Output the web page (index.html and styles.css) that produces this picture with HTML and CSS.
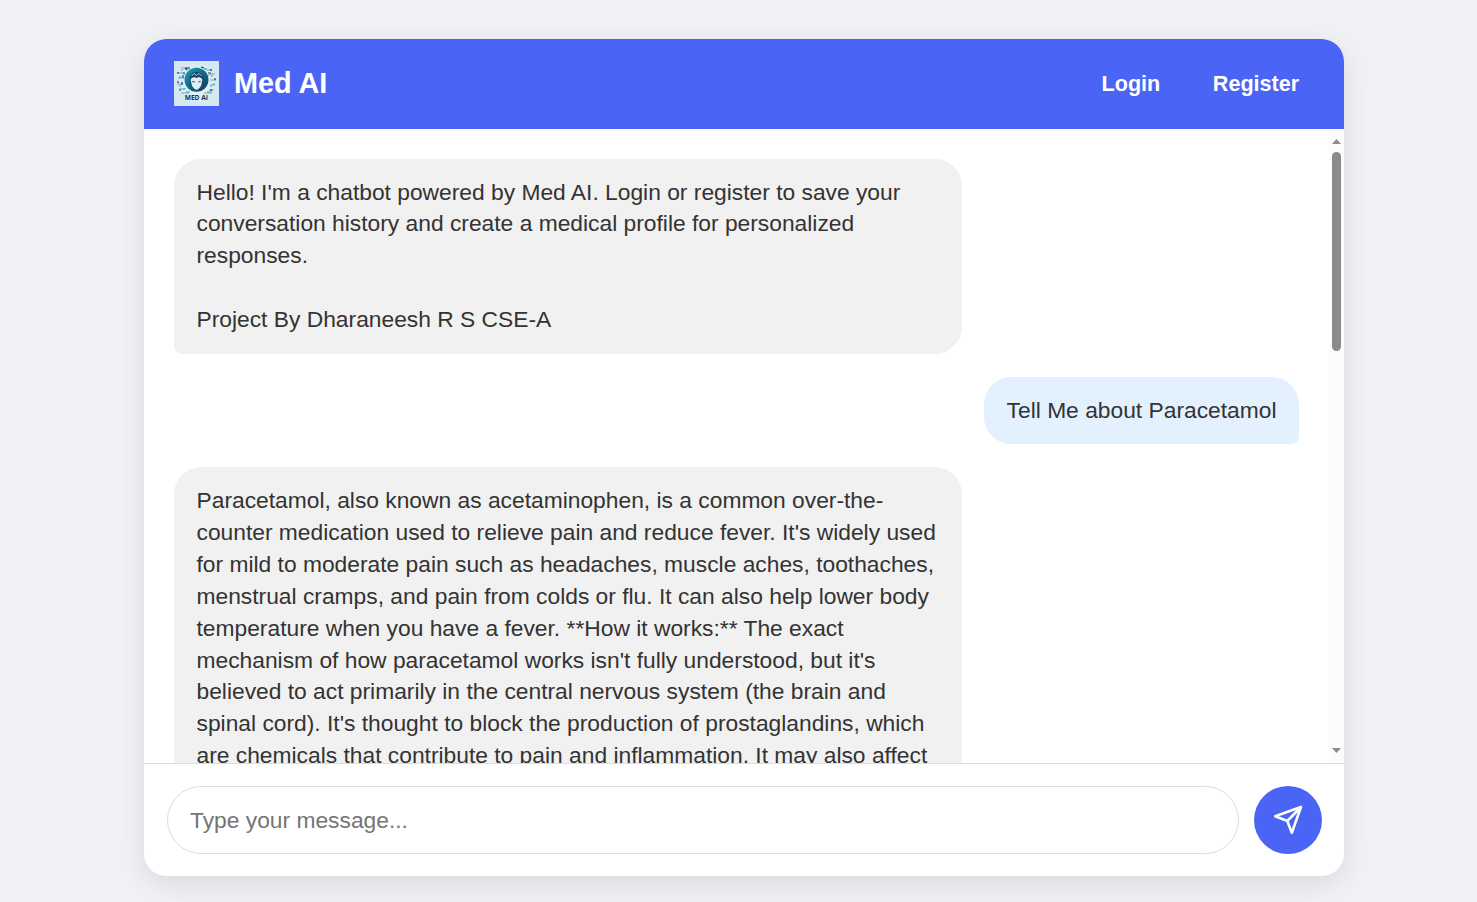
FILE: index.html
```
<!DOCTYPE html>
<html lang="en">
<head>
<meta charset="utf-8">
<title>Med AI</title>
<link rel="stylesheet" href="styles.css">
</head>
<body>
<main class="chat">
  <header class="chat-header">
    <div class="brand">
      <svg class="logo" viewBox="0 0 45 45" aria-hidden="true">
        <defs>
          <radialGradient id="bg"><stop offset="0" stop-color="#eff7f9"/><stop offset="1" stop-color="#d3e8f1"/></radialGradient>
          <linearGradient id="disc" x1="0" y1="0" x2="1" y2="1"><stop offset="0" stop-color="#18a3bd"/><stop offset=".5" stop-color="#10678f"/><stop offset="1" stop-color="#123a5c"/></linearGradient>
        </defs>
        <rect width="45" height="45" fill="url(#bg)"/>
        <g fill="none" stroke="#4b8ba5" stroke-width=".7">
          <path d="M7 7h6l3 2M4 12h5l2 2M4 17h6M3 23h6M5 28h5l2-1M7 32h8"/>
          <path d="M38 9h-5l-5-3M41 13h-5l-2 2M42 19h-6M41 24h-5M40 29h-5M38 32h-8"/>
        </g>
        <g fill="none" stroke="#1d4560" stroke-width="1.200">
          <path d="M11 7l2 2M4 11v2M9 14v3M4 20v2M8 21v3M12 7h4M27 6l3 1M37 8v2M34 12h3M41 17v2M37 28v2M5 29h2M9 12h2"/>
        </g>
        <g fill="none" stroke="#28b5d2" stroke-width="1.200">
          <path d="M6 15v2M5 25h2M9 28h2M12 31h4M33 31h5M38 14v2M40 22v2M36 25h2M30 8h3M7 9h2"/>
        </g>
        <circle cx="22.500" cy="18.800" r="12" fill="url(#disc)"/>
        <path d="M15.500 18.500c0-4.500 2.800-7.500 7-7.500s7 3 7 7.500l-1 5.500-3 4-3 1.500-3-1.500-3-4z" fill="#174460"/>
        <path d="M17 17.500l3-1.500 2.500 1 2.500-1 3 1.500 .3 2-1.300 5.500-2.200 2.800-2.300 1.200-2.300-1.200-2.200-2.800-1.300-5.500z" fill="#dceff5"/>
        <path d="M17.500 15l2.500-2.500 2.500 2 2.500-2 2.500 2.500" fill="none" stroke="#a9d8e3" stroke-width="1"/>
        <path d="M18.300 20.300l2.500.7M26.700 20.300l-2.500.7" fill="none" stroke="#1377a5" stroke-width="1.200"/>
        <text class="logo-text" x="22.300" y="39" text-anchor="middle" textLength="23" lengthAdjust="spacingAndGlyphs">MED AI</text>
      </svg>
      <h1 class="title">Med AI</h1>
    </div>
    <nav class="nav">
      <a class="nav-link">Login</a>
      <a class="nav-link">Register</a>
    </nav>
  </header>
  <div class="body">
    <section class="messages">
      <div class="message bot">Hello! I'm a chatbot powered by Med AI. Login or register to save your conversation history and create a medical profile for personalized responses.<br><br>Project By Dharaneesh R S CSE-A</div>
      <div class="message user">Tell Me about Paracetamol</div>
      <div class="message bot">Paracetamol, also known as acetaminophen, is a common over-the-counter medication used to relieve pain and reduce fever. It's widely used for mild to moderate pain such as headaches, muscle aches, toothaches, menstrual cramps, and pain from colds or flu. It can also help lower body temperature when you have a fever. **How it works:** The exact mechanism of how paracetamol works isn't fully understood, but it's believed to act primarily in the central nervous system (the brain and spinal cord). It's thought to block the production of prostaglandins, which are chemicals that contribute to pain and inflammation. It may also affect</div>
    </section>
    <div class="scrollbar">
      <svg class="arrow" viewBox="0 0 9 5"><path d="M4.500 0L9 5H0z"/></svg>
      <div class="thumb"></div>
      <svg class="arrow arrow-down" viewBox="0 0 9 5"><path d="M0 0h9L4.500 5z"/></svg>
    </div>
  </div>
  <footer class="composer">
    <input class="input" type="text" placeholder="Type your message...">
    <button class="send" aria-label="Send">
      <svg class="send-icon" viewBox="0 0 36 36"><path d="M31 5L5.200 14.200l12.100 4.800 4.500 11.700zM31 5L17.300 19"/></svg>
    </button>
  </footer>
</main>
</body>
</html>
```
FILE: styles.css
```
* { box-sizing: border-box; }

body {
  margin: 0;
  height: 902px;
  padding: 39px 0 0 144px;
  overflow: hidden;
  background: #f0f2f5;
  font-family: "Liberation Sans", Arial, sans-serif;
  color: #333;
}

.chat {
  display: flex;
  flex-direction: column;
  width: 1200px;
  height: 837px;
  overflow: hidden;
  border-radius: 22.5px;
  background: #fff;
  box-shadow: 0 7.5px 30px rgba(0, 0, 0, .1);
}

.chat-header {
  display: flex;
  flex: none;
  align-items: center;
  justify-content: space-between;
  height: 90px;
  padding: 0 44.8px 1px 30px;
  background: #4a65f5;
  color: #fff;
}

.brand { display: flex; align-items: center; gap: 15px; }
.logo { display: block; width: 45px; height: 45px; }
.logo-text { font: bold 6.5px "Open Sans", sans-serif; fill: #12324b; }
.title { margin: 0; font-size: 28.8px; line-height: 33px; }
.nav { display: flex; gap: 52.5px; }
.nav-link { font-size: 21.6px; font-weight: bold; line-height: 25px; }

.body { display: flex; flex: 1; min-height: 0; }

.messages {
  display: flex;
  flex: 1;
  flex-direction: column;
  gap: 22.46px;
  padding: 29.5px 30px 30px;
  overflow: hidden;
}

.message {
  flex: none;
  max-width: 787.5px;
  padding: 18px 22.5px;
  border-radius: 27px;
  font-size: 22.8px;
  line-height: 31.92px;
}

.bot { align-self: flex-start; border-bottom-left-radius: 7.5px; background: #f1f1f1; }
.user { align-self: flex-end; border-bottom-right-radius: 7.5px; background: #e3f1ff; }

.scrollbar {
  display: flex;
  flex-direction: column;
  align-items: center;
  width: 15px;
  padding: 10px 0;
  background: #fcfcfc;
}

.arrow { display: block; width: 9px; height: 5px; fill: #8b8b8b; }
.arrow-down { margin-top: auto; }
.thumb { width: 9px; height: 199px; margin-top: 8px; border-radius: 4.5px; background: #8b8b8b; }

.composer {
  display: flex;
  flex: none;
  gap: 15px;
  height: 113px;
  padding: 22px 22px 22px 22.5px;
  border-top: 1px solid #ddd;
}

.input {
  flex: 1;
  height: 68px;
  padding: 0 22.5px;
  border: 1px solid #ddd;
  border-radius: 37.5px;
  outline: none;
  background: #fff;
  font: 22.8px "Liberation Sans", Arial, sans-serif;
}

.input::placeholder { color: #757575; }

.send {
  display: flex;
  align-items: center;
  justify-content: center;
  width: 68px;
  height: 68px;
  padding: 0;
  border: 0;
  border-radius: 50%;
  background: #4a65f5;
}

.send-icon {
  width: 36px;
  height: 36px;
  fill: none;
  stroke: #fff;
  stroke-width: 2.6;
  stroke-linejoin: round;
  stroke-linecap: round;
}
```
